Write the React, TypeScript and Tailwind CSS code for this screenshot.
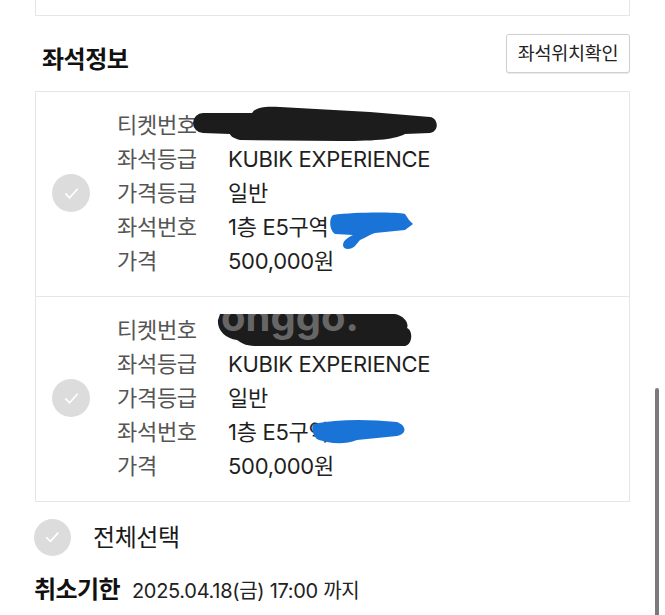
import React from 'react';

interface Seat {
  grade: string;
  priceGrade: string;
  seatNo: string;
  price: string;
}

const seats: Seat[] = [
  { grade: 'KUBIK EXPERIENCE', priceGrade: '일반', seatNo: '1층 E5구역', price: '500,000원' },
  { grade: 'KUBIK EXPERIENCE', priceGrade: '일반', seatNo: '1층 E5구역', price: '500,000원' },
];

const CheckCircle: React.FC<{ size?: number }> = ({ size = 38 }) => (
  <div
    className="rounded-full bg-[#dcdcdc] flex items-center justify-center shrink-0"
    style={{ width: size, height: size }}
  >
    <svg width={size * 0.5} height={size * 0.5} viewBox="0 0 20 20" fill="none">
      <path d="M4 10.5l4 4 8-9" stroke="#fff" strokeWidth="1.8" strokeLinecap="round" strokeLinejoin="round" />
    </svg>
  </div>
);

// redaction marks drawn over the ticket number / seat number
const BlackBlob: React.FC<{ variant: number }> = ({ variant }) =>
  variant === 0 ? (
    <svg className="absolute left-[154px] top-[12px]" width="250" height="40" viewBox="0 0 250 40">
      <path
        d="M13 9 L62 9 C66 3 75 2 90 3 L180 8 L240 13 C248 14 250 27 240 29 L215 30 C205 35 190 37 150 37 L50 36 C42 34 40 31 40 30 L13 29 A10 10 0 0 1 13 9 Z"
        fill="#1c1c1c"
      />
    </svg>
  ) : (
    <svg className="absolute left-[179px] top-[9px]" width="200" height="44" viewBox="0 0 200 44">
      <defs>
        <clipPath id="blob2">
          <path d="M5 8 L180 8 C190 10 194 18 192 22 C198 24 198 38 190 40 L40 40 C30 40 25 36 22 34 C10 32 2 24 3 14 Z" />
        </clipPath>
      </defs>
      <path d="M5 8 L180 8 C190 10 194 18 192 22 C198 24 198 38 190 40 L40 40 C30 40 25 36 22 34 C10 32 2 24 3 14 Z" fill="#1c1c1c" />
      <g clipPath="url(#blob2)">
        <text x="6" y="25" fontSize="40" fontWeight="700" fill="#666" fontFamily="Inter, sans-serif">onggo.</text>
      </g>
    </svg>
  );

const BlueScribble: React.FC<{ variant: number }> = ({ variant }) =>
  variant === 0 ? (
    <svg className="absolute left-[289px] top-[118px]" width="92" height="42" viewBox="0 0 92 42">
      <path
        d="M8 5 C30 2 70 2 80 4 L84 10 L88 14 L80 20 L50 23 C42 26 40 28 35 30 L30 36 C26 40 18 40 18 35 C18 30 24 27 28 25 L10 24 C4 20 4 8 8 5 Z"
        fill="#1a74d8"
      />
    </svg>
  ) : (
    <svg className="absolute left-[271px] top-[119px]" width="104" height="32" viewBox="0 0 104 32">
      <path
        d="M6 8 C30 3 60 3 90 6 C100 10 100 18 90 20 L50 24 C40 28 30 28 20 26 L12 24 C6 22 4 12 6 8 Z"
        fill="#1a74d8"
      />
    </svg>
  );

const Row: React.FC<{ label: string; value: string }> = ({ label, value }) => (
  <div className="flex h-[34px] items-center">
    <span className="w-[111px] text-[#555555]">{label}</span>
    <span className="text-[#1f1f1f]">{value}</span>
  </div>
);

const SeatCard: React.FC<{ seat: Seat; index: number }> = ({ seat, index }) => (
  <div className={`relative flex items-center pl-[16px] pt-[16px] pb-[18px] ${index > 0 ? 'border-t border-[#e6e6e6]' : ''}`}>
    <CheckCircle />
    <div className="ml-[27px] flex flex-col text-[22px] leading-[34px] tracking-[-0.3px]">
      <Row label="티켓번호" value="" />
      <Row label="좌석등급" value={seat.grade} />
      <Row label="가격등급" value={seat.priceGrade} />
      <Row label="좌석번호" value={seat.seatNo} />
      <Row label="가격" value={seat.price} />
    </div>
    <BlackBlob variant={index} />
    <BlueScribble variant={index} />
  </div>
);

export default function App() {
  return (
    <div
      className="relative w-[665px] h-[615px] overflow-hidden bg-white"
      style={{ fontFamily: 'Inter, "Noto Sans CJK KR", sans-serif' }}
    >
      <div className="mx-[35px] h-[16px] border-x border-b border-[#e6e6e6]" />

      <div className="mx-[35px] mt-[18px] flex h-[39px] items-start justify-between">
        <h2 className="mt-[11px] pl-[7px] text-[24px] leading-[30px] font-bold text-[#111] tracking-[-0.5px]">좌석정보</h2>
        <button className="h-[39px] w-[124px] rounded-[3px] border border-[#cfcfcf] bg-white text-[18.5px] text-[#222] tracking-[-0.3px] shadow-[0_1px_1px_rgba(0,0,0,0.08)]">
          좌석위치확인
        </button>
      </div>

      <div className="mx-[35px] mt-[18px] border border-[#e6e6e6]">
        {seats.map((s, i) => (
          <SeatCard key={i} seat={s} index={i} />
        ))}
      </div>

      <div className="ml-[34px] mt-[17px] flex items-center">
        <CheckCircle size={37} />
        <span className="ml-[22px] text-[24px] leading-[37px] text-[#1a1a1a] tracking-[-0.4px]">전체선택</span>
      </div>

      <div className="ml-[34px] mt-[16px] flex items-baseline">
        <span className="text-[24px] font-bold text-[#111] tracking-[-0.6px]">취소기한</span>
        <span className="ml-[12px] text-[20px] text-[#222] tracking-[-0.3px]">2025.04.18(금) 17:00 까지</span>
      </div>

      <div className="absolute right-[6px] top-[388px] h-[240px] w-[4px] rounded-full bg-[#7a7a7a]" />
    </div>
  );
}
